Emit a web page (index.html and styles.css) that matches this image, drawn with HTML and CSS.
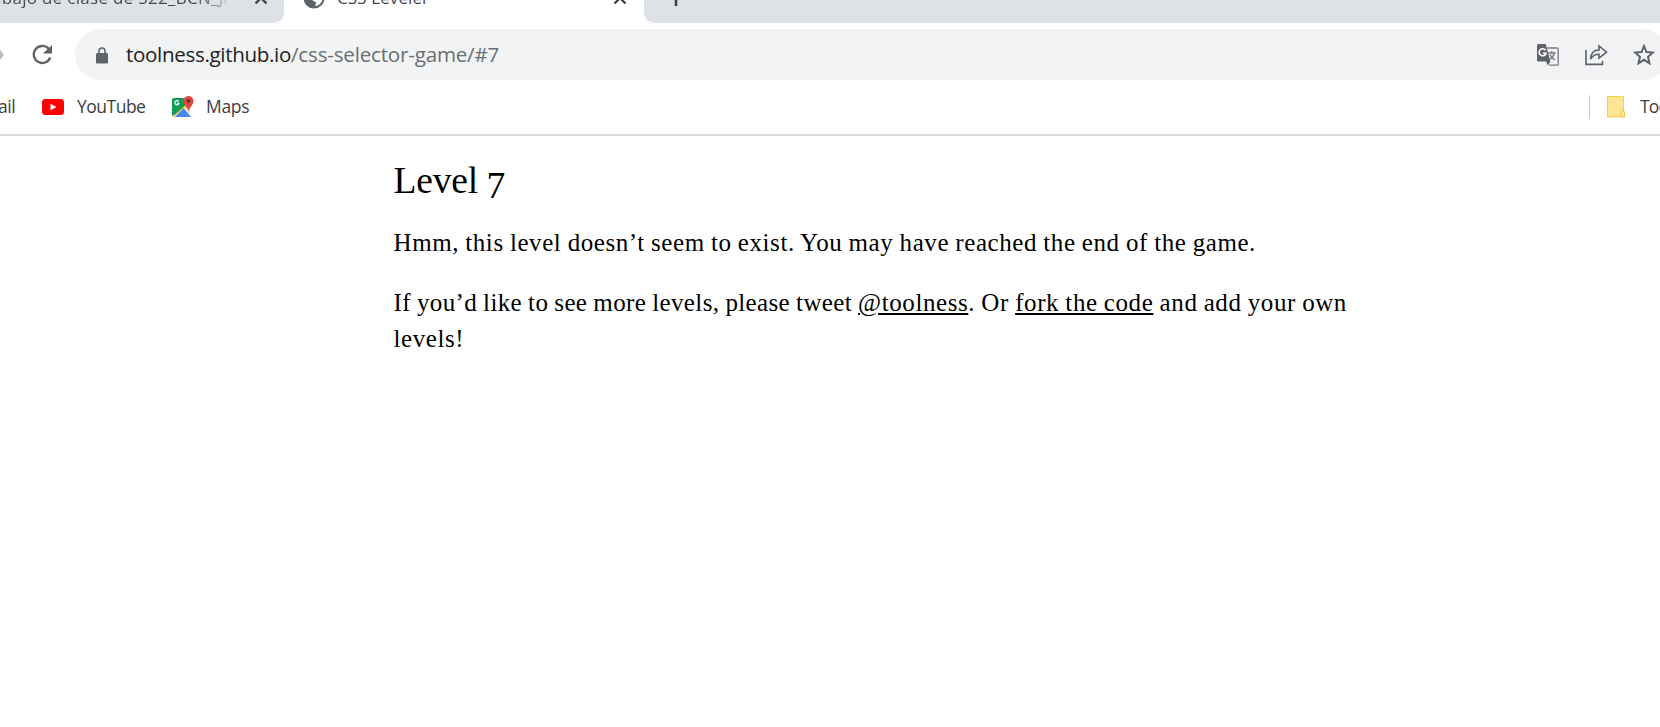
FILE: index.html
```html
<!DOCTYPE html>
<html lang="en">
<head>
<meta charset="utf-8">
<title>CSS Leveler</title>
<link rel="stylesheet" href="styles.css">
</head>
<body>
<header class="browser">
  <div class="tabs">
    <div class="tab tab-previous"><span class="tab-title faded">abajo de clase de S22_BCN_Jav</span>
      <svg class="close" width="14" height="14" viewBox="0 0 14 14"><path d="M1.5 1.5l11 11M12.500 1.500l-11 11"/></svg></div>
    <div class="tab tab-active">
      <svg class="globe" width="22" height="22" viewBox="0 0 22 22"><circle cx="11" cy="11" r="9.500"/><path d="M2 9l7 2 1 3 3 1-1 6h-2C5 20 1 16 2 9zM1.500 8L3 3h8v6l-3 3 2 3 1 6C5 21 1 16 1.500 8z"/></svg>
      <span class="tab-title active-title">CSS Leveler</span>
      <svg class="close" width="14" height="14" viewBox="0 0 14 14"><path d="M1.5 1.500l11 11M12.500 1.500l-11 11"/></svg></div>
    <div class="tab tab-rest"><svg width="18" height="18" viewBox="0 0 18 18"><path d="M9 0v18M0 9h18"/></svg></div>
  </div>
  <div class="toolbar">
    <svg class="forward" width="4" height="10" viewBox="0 0 4 10"><path d="M0 0l4 5-4 5z"/></svg>
    <svg class="reload" width="22" height="22" viewBox="0 0 22 22"><path class="arc" d="M17.500 4.700A8.500 8.500 0 1 0 19.200 13.500"/><path class="head" d="M21 1v8.500h-9z"/></svg>
    <div class="omnibox">
      <svg class="lock" width="12" height="17" viewBox="0 0 12 17"><path class="shackle" d="M3 7V4a3 3 0 0 1 6 0v3"/><rect y="6" width="12" height="10.500" rx="1.300"/></svg>
      <span class="url"><span class="host">toolness.github.io</span><span class="path">/css-selector-game/#7</span></span>
      <svg class="translate" width="22" height="22" viewBox="0 0 22 22"><path class="outline" d="M10 4h10.200q1 0 1 1v15.200q0 1-1 1h-8"/><path class="solid" d="M1.500 0h7.300l4.500 17.500H1.500Q0 17.500 0 16V1.500Q0 0 1.500 0zM9 17.500h4.500l-2.800 4z"/><path class="g" d="M8.500 6.300A3.500 3.500 0 1 0 9 9.200H5.800"/><path class="outline" d="M11 9h7.500M14.700 7v2M17.500 9c-.7 3-2.500 5-5 6.500M13 10.500c1 2.500 2.500 4 5 5.500"/></svg>
      <svg class="share" width="23" height="22" viewBox="0 0 23 22"><path d="M1 6v14.400h16.500V17M5.500 15C6 9 9 6 14 6V2l7.500 6.200-7.500 6v-4c-4 0-6 1-8.500 4.800z"/></svg>
      <svg class="star" width="22" height="21" viewBox="0 0 22 21"><path d="M11 2l2.400 6 6.600.5-5 4.300 1.500 6.500L11 15.800l-5.500 3.500L7 12.800 2 8.500 8.600 8z"/></svg>
    </div>
  </div>
  <nav class="bookmarks">
    <span class="mail">ail</span>
    <svg class="youtube" width="22" height="16" viewBox="0 0 22 16"><rect width="22" height="16" rx="3.500" fill="#f00"/><path d="M8.500 4.800l6 3.200-6 3.200z" fill="#fff"/></svg>
    <span class="label-yt">YouTube</span>
    <svg class="map" width="22" height="22" viewBox="0 0 22 22"><path d="M2 2h17v19H2Q0 21 0 19V4q0-2 2-2z" fill="#eee"/><path d="M2 2h13l2 7L1 20 0 19V4q0-2 2-2z" fill="#149b57"/><path d="M1 20.500L17 6l3 5-9 2-8 8z" fill="#ffd54a"/><path d="M3 21l8.500-9 7.500 9z" fill="#4389f5"/><path d="M6.700 5.500A2.100 2.100 0 1 0 7 7.300H5" fill="none" stroke="#fff" stroke-width="1.200"/><path d="M16.500 0a5 5 0 0 1 5 5c0 4-4 5.500-5 11-1-5.500-5-7-5-11a5 5 0 0 1 5-5z" fill="#df493e"/><circle cx="16.500" cy="5" r="2" fill="#792c28"/></svg>
    <span class="label-maps">Maps</span>
    <span class="divider"></span>
    <svg class="folder" width="19" height="22" viewBox="0 0 19 22"><path d="M.5.500h16v15h-2V21H.5z" fill="#ffe591" stroke="#f4d04e"/><path d="M14 21v-4.500q0-1.800 1.800-1.800t1.800 1.800V21z" fill="#ffe591" stroke="#eec43f"/></svg>
    <span class="label-last">Too</span>
  </nav>
</header>
<main class="page">
  <h1>Level <span class="numeral">7</span></h1>
  <p class="missing">Hmm, this level doesn’t seem to exist. You may have reached the end of the game.</p>
  <p><span class="lead">If you’d like to see more levels, please tweet </span><a>@toolness</a>. Or <a>fork the code</a> and add your own levels!</p>
</main>
</body>
</html>
```
FILE: styles.css
```css
* { box-sizing: border-box; }
body { margin: 0; background: #fff; color: #000; overflow: hidden; }
svg { display: block; flex: none; }
.browser { height: 136px; border-bottom: 2px solid #dadada; font-family: "Open Sans", "Noto Sans", sans-serif; overflow: hidden; }
.tabs { display: flex; height: 23px; background: #fff; overflow: hidden; }
.tab { flex: none; display: flex; height: 23px; white-space: nowrap; }
.tab-previous { width: 284px; background: #dee1e6; border-bottom-right-radius: 10px; }
.tab-title { font-size: 17px; line-height: 24px; margin-top: -14px; color: #45484c; }
.faded { width: 234px; margin-left: -8px; letter-spacing: .3px; overflow: hidden; color: transparent; background: linear-gradient(90deg, #45484c 205px, #dee1e6 242px); background-clip: text; -webkit-background-clip: text; }
.close { margin-top: -9px; fill: none; stroke: #3c4043; stroke-width: 2.2; }
.tab-previous .close { margin-left: 28px; }
.tab-active { width: 360px; padding-left: 19px; }
.globe { margin-top: -13px; fill: #5f6368; }
.globe circle { fill: #fff; stroke: #5f6368; stroke-width: 2; }
.active-title { width: 270px; margin-left: 12px; letter-spacing: .1px; }
.tab-active .close { margin-left: 6px; }
.tab-rest { width: 1016px; background: #dee1e6; border-bottom-left-radius: 10px; padding-left: 23px; }
.tab-rest svg { margin-top: -12px; fill: none; stroke: #3c4043; stroke-width: 2.6; }
.toolbar { display: flex; align-items: center; height: 63px; }
.forward { fill: #bcbec0; }
.reload { margin-left: 27px; }
.arc { fill: none; stroke: #5f6368; stroke-width: 2.3; }
.head { fill: #5f6368; }
.omnibox { display: flex; align-items: center; flex: none; width: 1593px; height: 51px; margin-left: 22px; border-radius: 26px; background: #f1f3f4; padding-left: 21px; }
.lock { fill: #5f6368; margin-top: 2px; }
.shackle { fill: none; stroke: #5f6368; stroke-width: 1.6; }
.url { width: 1411px; margin: -2px 0 0 18px; font-size: 20.6px; line-height: 30px; white-space: nowrap; }
.host { color: #202124; letter-spacing: -.34px; }
.path { color: #6b6e72; letter-spacing: -.2px; }
.translate .solid { fill: #5f6368; }
.outline { fill: none; stroke: #777a7e; stroke-width: 1.3; }
.g { fill: none; stroke: #fff; stroke-width: 1.6; }
.share { margin-left: 26px; fill: none; stroke: #5f6368; stroke-width: 1.6; }
.star { margin-left: 25px; fill: none; stroke: #5f6368; stroke-width: 2; }
.bookmarks { display: flex; align-items: center; height: 42px; font-size: 17.5px; line-height: 24px; letter-spacing: -.5px; color: #3c4043; white-space: nowrap; }
.bookmarks span:not(.divider) { margin-top: -2px; }
.mail { width: 44px; flex: none; margin-left: -2px; }
.label-yt { width: 95px; flex: none; margin-left: 13px; }
.label-maps { width: 60px; flex: none; margin-left: 12px; letter-spacing: -.3px; }
.divider { width: 1px; height: 24px; margin-left: 1323px; background: #c7cacd; flex: none; }
.folder { margin-left: 17px; }
.label-last { margin-left: 14px; letter-spacing: -.8px; }
.page { width: 975px; margin: 0 0 0 393.500px; padding-top: 20px; font-family: "Liberation Serif", serif; font-size: 25px; line-height: 36px; letter-spacing: .58px; word-spacing: -.6px; }
h1 { margin: 0; font-size: 37.5px; font-weight: 400; line-height: 50px; height: 50px; letter-spacing: -.2px; }
.numeral { display: inline-block; line-height: 50px; height: 50px; vertical-align: -5px; }
p { margin: 19px 0 24px; }
p + p { margin-top: 0; }
.lead { letter-spacing: .37px; }
a { text-decoration: underline; text-decoration-thickness: 2px; text-underline-offset: 2px; }
```
